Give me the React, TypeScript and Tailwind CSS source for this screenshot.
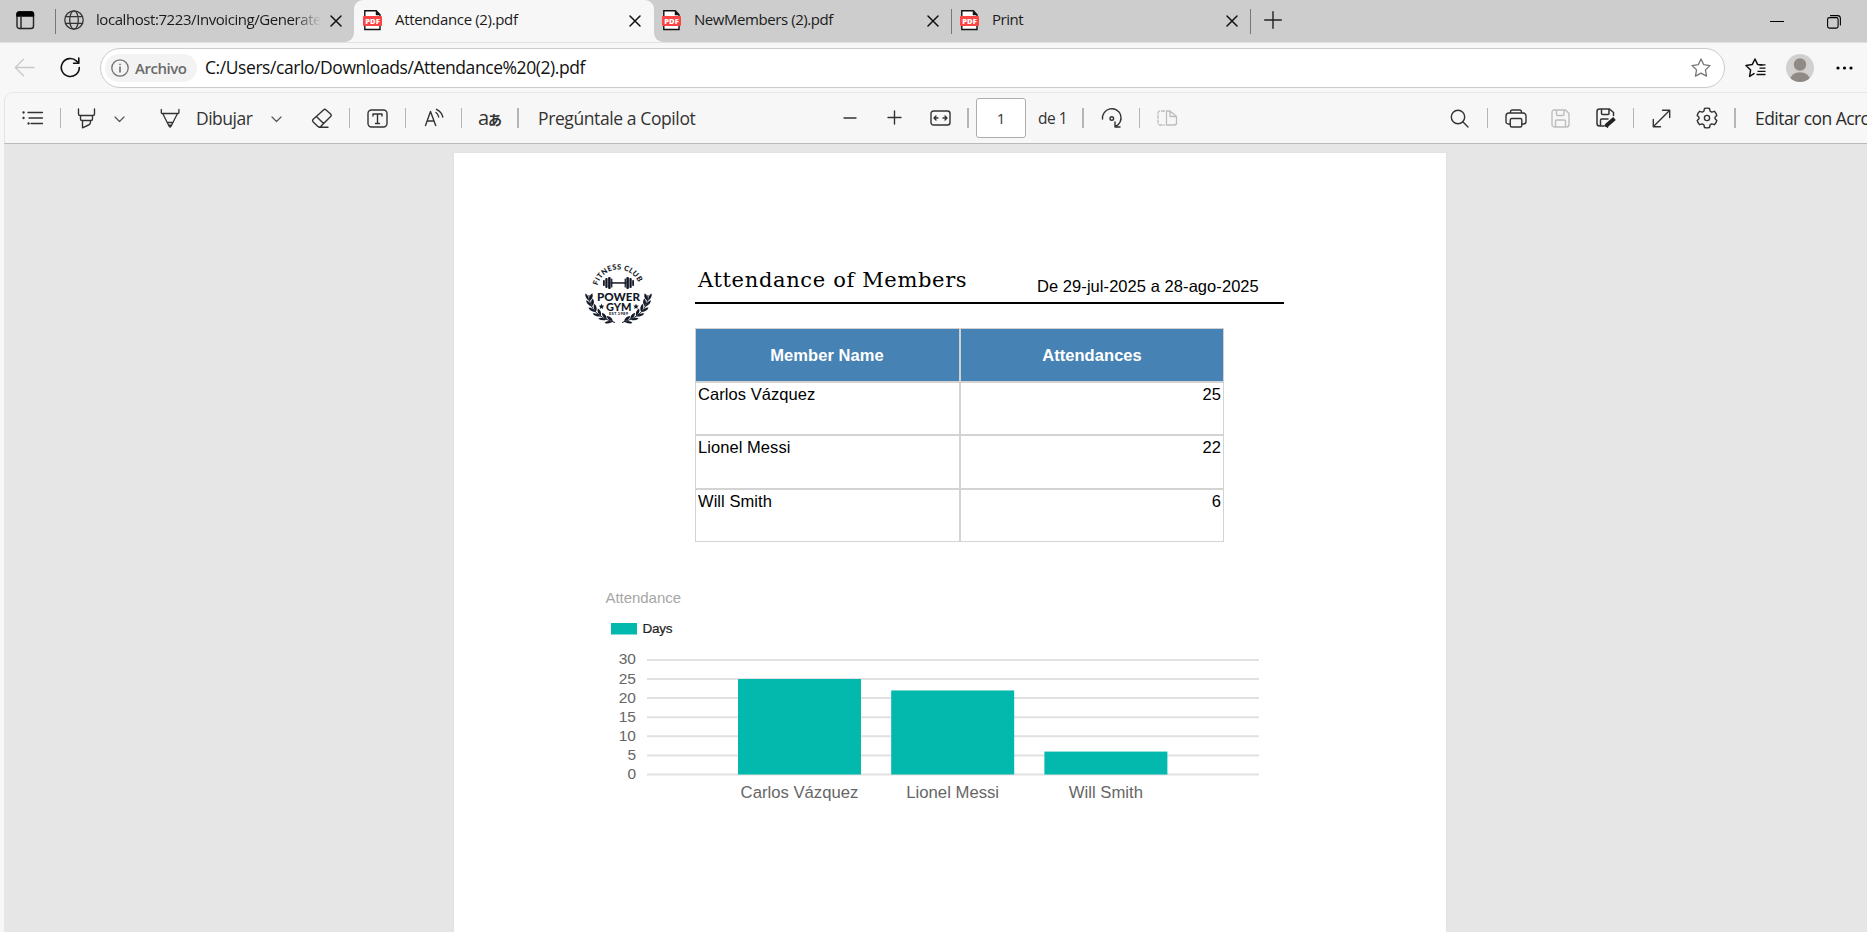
import type { ReactNode } from "react";

const UI = "font-['Open_Sans','Noto_Sans',sans-serif]";

type IconProps = {
  w: number;
  h: number;
  className?: string;
  color?: string;
  sw?: number;
  children: ReactNode;
};

function Icon({ w, h, className = "", color = "#333333", sw = 1.4, children }: IconProps) {
  return (
    <svg
      width={w}
      height={h}
      viewBox={`0 0 ${w} ${h}`}
      fill="none"
      stroke={color}
      strokeWidth={sw}
      strokeLinecap="round"
      strokeLinejoin="round"
      className={`shrink-0 ${className}`}
    >
      {children}
    </svg>
  );
}

function PdfIcon({ className = "" }: { className?: string }) {
  return (
    <svg width="20" height="21" viewBox="0 0 20 21" className={`shrink-0 ${className}`}>
      <path d="M1.800 .8h11.500l3.700 4v14.700H1.800z" fill="#ffffff" stroke="#111111" strokeWidth="1.400" />
      <path d="M13 1v4h4z" fill="#111111" stroke="#111111" strokeWidth=".5" />
      <rect x="0" y="6" width="19" height="10" rx="1" fill="#fb4545" />
      <text
        x="9.5"
        y="13.700"
        textAnchor="middle"
        fontFamily="Open Sans"
        fontWeight="800"
        fontSize="7.6"
        textLength="14.5"
        fill="#ffffff"
      >
        PDF
      </text>
    </svg>
  );
}

function CloseIcon({ className = "" }: { className?: string }) {
  return (
    <Icon w={12} h={12} color="#111111" sw={1.5} className={className}>
      <path d="M1 1l10 10M11 1L1 11" />
    </Icon>
  );
}

function TabBar() {
  return (
    <div className="flex h-[42px] shrink-0">
      <div className="flex h-[42px] w-[354px] items-start rounded-br-[9px] bg-[#cdcdcd]">
        <Icon w={19} h={19} className="ml-4 mt-[11px]" color="#222222">
          <rect x="1" y="1" width="16.5" height="16.5" rx="2.5" />
          <path d="M1 5V3q0-2 2-2h12.500q2 0 2 2v2z" fill="#000000" stroke="#000000" />
          <path d="M5 5v12.500" />
        </Icon>
        <div className="ml-5 mt-[9px] h-[25px] w-px bg-[#777777]" />
        <Icon w={20} h={20} className="ml-2 mt-[10px]" color="#333333" sw={1.3}>
          <circle cx="10" cy="10" r="9.200" />
          <ellipse cx="10" cy="10" rx="4.300" ry="9.200" />
          <path d="M1.500 6.700h17M1.500 13.300h17" />
        </Icon>
        <div className="ml-3 mt-2 w-[225px] overflow-hidden [mask-image:linear-gradient(to_right,black_88%,transparent)]">
          <span className="block whitespace-nowrap text-[15px] leading-[22px] tracking-[-0.43px] text-[#1b1b1b]">
            localhost:7223/Invoicing/Generate
          </span>
        </div>
        <CloseIcon className="ml-[9px] mt-[15px]" />
      </div>
      <div className="h-[42px] w-[300px] bg-[#cdcdcd]">
        <div className="flex h-full items-start rounded-t-[9px] bg-[#f7f7f7]">
          <PdfIcon className="ml-[9px] mt-[10px]" />
          <span className="ml-3 mt-2 w-[234px] whitespace-nowrap text-[15px] leading-[22px] tracking-[-0.34px] text-[#1b1b1b]">
            Attendance (2).pdf
          </span>
          <CloseIcon className="mt-[15px]" />
        </div>
      </div>
      <div className="flex h-[42px] flex-1 items-start rounded-bl-[9px] bg-[#cdcdcd]">
        <PdfIcon className="ml-2 mt-[10px]" />
        <span className="ml-3 mt-2 w-[233px] whitespace-nowrap text-[15px] leading-[22px] tracking-[-0.43px] text-[#1b1b1b]">
          NewMembers (2).pdf
        </span>
        <CloseIcon className="mt-[15px]" />
        <div className="ml-3 mt-[9px] h-[25px] w-px bg-[#777777]" />
        <PdfIcon className="ml-2 mt-[10px]" />
        <span className="ml-3 mt-2 w-[234px] whitespace-nowrap text-[15px] leading-[22px] tracking-[-0.5px] text-[#1b1b1b]">
          Print
        </span>
        <CloseIcon className="mt-[15px]" />
        <div className="ml-3 mt-[9px] h-[25px] w-px bg-[#777777]" />
        <Icon w={18} h={18} className="ml-[13px] mt-[11px]" color="#222222">
          <path d="M9 .7v16.600M.7 9h16.600" />
        </Icon>
        <div className="flex-1" />
        <svg width="14" height="3" className="mt-5 shrink-0">
          <path d="M0 1.500h14" stroke="#000000" strokeWidth="1" />
        </svg>
        <Icon w={14} h={14} className="ml-[43px] mr-[26px] mt-[15px]" color="#000000" sw={1.1}>
          <rect x=".6" y="2.600" width="10.500" height="10.500" rx="1.800" />
          <path d="M3.500.6h7q2.900 0 2.900 2.900v6.500" />
        </Icon>
      </div>
    </div>
  );
}

const STAR = "M10 1l2.750 5.700 6.250.85-4.550 4.350 1.100 6.200L10 15.100l-5.550 3 1.100-6.200L1 7.550l6.250-.85z";

function AddressBar() {
  return (
    <div className="flex h-[50px] shrink-0 items-start border-t border-[#e2e2e2] bg-[#f7f7f7]">
      <Icon w={21} h={19} className="ml-[14px] mt-[15px]" color="#c8c8c8" sw={1.3}>
        <path d="M20 9.500H1.500M9.500 1.300L1.300 9.500l8.200 8.200" />
      </Icon>
      <Icon w={21} h={21} className="ml-[25px] mt-[14px]" color="#111111" sw={1.600}>
        <path d="M19.300 10.500a9 9 0 1 1-2.700-6.400l1.900 1.900" />
        <path d="M18.800 1v5.200h-5.200" />
      </Icon>
      <div className="ml-[19px] mt-[5px] flex h-10 w-[1625px] items-center rounded-full border border-[#cccccc] bg-white">
        <div className="ml-1 flex h-7 w-[92px] items-center rounded-full bg-[#f3f3f3]">
          <Icon w={18} h={18} className="ml-[6px]" color="#6f6f6f" sw={1.3}>
            <circle cx="9" cy="9" r="8.200" />
            <path d="M9 8v5M9 5.200v.2" strokeWidth="1.600" />
          </Icon>
          <span className="ml-[6px] text-[15px] font-semibold leading-5 tracking-[-0.45px] text-[#6b6b6b]">Archivo</span>
        </div>
        <span className="ml-2 mt-[-2px] w-[1100px] whitespace-nowrap text-[17.5px] leading-6 tracking-[-0.43px] text-[#111111]">
          C:/Users/carlo/Downloads/Attendance%20(2).pdf
        </span>
        <div className="flex-1" />
        <Icon w={20} h={20} className="mr-[13px]" color="#767676" sw={1.3}>
          <path d={STAR} />
        </Icon>
      </div>
      <Icon w={22} h={20} className="ml-5 mt-[15px]" color="#111111" sw={1.500}>
        <path d="M9 15.600L4.600 18.400l1-6.400L1 7.500l6.200-.9L10 1l2.600 5.400 4.400.5" />
        <path d="M14.500 10.200h6M12.500 13.300h8M14.500 6.900h6M11.500 16.500h9" strokeLinecap="butt" strokeWidth="1.300" />
      </Icon>
      <svg width="28" height="28" viewBox="0 0 28 28" className="ml-[19px] mt-[11px] shrink-0">
        <clipPath id="avatar">
          <circle cx="14" cy="14" r="14" />
        </clipPath>
        <g clipPath="url(#avatar)">
          <rect width="28" height="28" fill="#d2d0ce" />
          <circle cx="14" cy="10.500" r="6.200" fill="#8f8a86" />
          <ellipse cx="14" cy="26" rx="10" ry="7.800" fill="#8f8a86" />
        </g>
      </svg>
      <svg width="17" height="4" className="ml-[22px] mt-[23px] shrink-0">
        <circle cx="2" cy="2" r="1.600" />
        <circle cx="8.500" cy="2" r="1.600" />
        <circle cx="15" cy="2" r="1.600" />
      </svg>
    </div>
  );
}

function Sep({ className }: { className: string }) {
  return <div className={`h-5 bg-[#b5b5b5] ${className}`} />;
}

function Chevron({ className }: { className: string }) {
  return (
    <Icon w={11} h={7} className={`mt-[3px] ${className}`} color="#555555" sw={1.2}>
      <path d="M1 1l4.500 4.500L10 1" />
    </Icon>
  );
}

function PdfToolbar() {
  return (
    <div className="flex h-[52px] shrink-0 items-center overflow-hidden whitespace-nowrap rounded-tl-[9px] border-b border-l border-t border-b-[#bababa] border-l-[#e4e4e4] border-t-[#e9e9e9] bg-[#f7f7f7] text-[#333333] [&>*]:shrink-0">
      <Icon w={22} h={16} className="ml-[17px]" sw={1.300}>
        <path d="M6 2.500h14.500M7 8h13.500M9 13.500h11.500" />
        <path d="M1.500 2.500h.1M1.500 8h.1M6.500 13.500h.1" strokeWidth="2.300" />
      </Icon>
      <Sep className="ml-4 w-px" />
      <Icon w={20} h={21} className="ml-4">
        <path d="M1.500 1v5q0 1.500 1.500 1.500h13q1.500 0 1.500-1.500V1M3.500 7.500v3.500q0 1.500 1.500 1.500h9q1.500 0 1.500-1.500V7.500M5.500 12.500v7.300l6-2.800q2-1 2-2.800v-1.700" />
      </Icon>
      <Chevron className="ml-[17px]" />
      <Icon w={21} h={21} className="ml-[35px]" sw={1.300}>
        <path d="M1.300 1.500v3.200q0 .8.800.8h16q.8 0 .8-.8V1.500M2.700 5.500l6.300 12.500q1.100 2 2.200 0l6.300-12.500M7.200 14.500h5.800" />
        <path d="M8.700 17l1.400 2.200 1.400-2.200z" fill="#333333" strokeWidth=".6" />
      </Icon>
      <span className="ml-[15px] w-[56px] text-[17.5px] leading-6 tracking-[-0.5px]">Dibujar</span>
      <Chevron className="ml-[19px]" />
      <Icon w={22} h={21} className="ml-[29px]">
        <path d="M12.500 2q1.300-1.300 2.600 0l4.500 4q1.300 1.300 0 2.600L9.700 18.500q-1.400 1.200-2.700 0l-4.800-4.600q-1.200-1.300 0-2.600zM5.600 8.700l7 6.700M8 19.300h9" />
      </Icon>
      <Sep className="ml-4 w-px" />
      <Icon w={21} h={19} className="ml-[17px]" sw={1.400}>
        <rect x="1" y="1" width="19" height="17" rx="3.500" />
        <path d="M6 7V5h9v2M10.500 5v9.500M8.500 14.500h4" />
      </Icon>
      <Sep className="ml-[17px] w-px" />
      <Icon w={21} h={20} className="ml-[18px]">
        <path d="M1.500 17.500L6.500 3.500l5.200 14M3.100 13h7M12 4.500q2.200 1.700 2.700 4.500M12.500 1.300q5.300 2.700 6.300 7.700" />
      </Icon>
      <Sep className="ml-4 w-px" />
      <span className="ml-4 flex w-6 items-baseline leading-5">
        <span className="w-[10px] text-[20px]">a</span>
        <span className="w-[14px] font-['Noto_Sans_CJK_JP',sans-serif] text-[14px] font-bold">あ</span>
      </span>
      <Sep className="ml-[15px] w-[2px]" />
      <span className="ml-[19px] w-[160px] text-[17.5px] leading-6 tracking-[-0.4px]">Pregúntale a Copilot</span>
      <Icon w={14} h={14} className="ml-[145px]">
        <path d="M1 7h12" />
      </Icon>
      <Icon w={15} h={15} className="ml-[30px] mt-[-1px]">
        <path d="M1 7.500h13M7.500 1v13" />
      </Icon>
      <Icon w={21} h={16} className="ml-7" sw={1.400}>
        <rect x="1" y="1" width="19" height="14" rx="2.500" />
        <path d="M4 8h4M6 6L4 8l2 2M17 8h-4M15 6l2 2-2 2" />
      </Icon>
      <Sep className="ml-4 w-[2px]" />
      <div className="ml-[7px] flex h-10 w-[50px] items-center justify-center rounded-[3px] border border-[#adadad] bg-white text-[15px]">
        1
      </div>
      <span className="ml-3 w-[30px] text-[15.5px] leading-6 tracking-[-0.5px]">de 1</span>
      <Sep className="ml-[14px] w-[2px]" />
      <Icon w={22} h={22} className="ml-[17px]" sw={1.400}>
        <path d="M1.500 12a9.300 9.300 0 1 1 13 7.500M14 15v5h5" />
        <circle cx="10.800" cy="11.500" r="1.800" />
      </Icon>
      <Sep className="ml-4 w-px" />
      <Icon w={21} h={16} className="ml-[17px]" color="#bdbdbd" sw={1.3}>
        <path d="M9.500 1H13l6.500 5.500v6.500q0 2-2 2h-8zM13 1.500v5h6" />
        <path d="M7.500 1H3Q1 1 1 3v10q0 2 2 2h4.500" strokeDasharray="3 1.800" />
      </Icon>
      <Icon w={20} h={19} className="ml-[272px]" sw={1.4}>
        <circle cx="8" cy="8" r="6.700" />
        <path d="M12.800 12.800l5.200 5.200" />
      </Icon>
      <Sep className="ml-[17px] w-px" />
      <Icon w={22} h={19} className="ml-[17px]" sw={1.400}>
        <path d="M5.500 4V3q0-2 2-2h7q2 0 2 2v1M5 15H3.500Q1 15 1 12.500V7q0-3 3-3h14q3 0 3 3v5.500q0 2.500-2.500 2.500H17" />
        <rect x="5.300" y="9.500" width="11.500" height="8.500" rx="1.500" />
      </Icon>
      <Icon w={20} h={19} className="ml-6" color="#bdbdbd" sw={1.4}>
        <path d="M3.500 1h11L18 4.500v11q0 2.500-2.500 2.500h-12Q1 18 1 15.500v-12Q1 1 3.500 1zM5.500 1.500v4q0 1 1 1h5.500q1 0 1-1v-4M4.500 18v-6q0-1 1-1h8q1 0 1 1v6" />
      </Icon>
      <Icon w={21} h={20} className="ml-[25px]" sw={1.500}>
        <path d="M8 18H3.500Q1 18 1 15.500v-12Q1 1 3.500 1h10L17.500 4.500v3M5.500 1.500v4q0 1 1 1H12q1 0 1-1v-4M4.500 18v-6q0-1 1-1H12" />
        <path d="M18.500 10.500l-7.500 6.500-1 2" strokeWidth="4" stroke="#222222" strokeLinecap="butt" />
      </Icon>
      <Sep className="ml-4 w-px" />
      <Icon w={20} h={19} className="ml-[18px]" sw={1.400}>
        <path d="M1.500 17.500L17.500 1.500M10.500 1.300h7.200V8.500M1.300 10.500v7.200h7.200" />
      </Icon>
      <Icon w={22} h={22} className="ml-6" sw={1.400}>
        <path d="M8.500 1.500q2.500-.7 5 0l.6 2.600 1.600 1 2.700-.8q1.800 1.800 2.400 4.200L19 10.300v1.400l1.800 1.800q-.6 2.400-2.400 4.200l-2.700-.8-1.600 1-.6 2.600q-2.500.7-5 0l-.6-2.600-1.600-1-2.700.8q-1.800-1.800-2.400-4.200L3 11.700v-1.400L1.200 8.500q.6-2.400 2.400-4.200l2.700.8 1.600-1z" />
        <circle cx="11" cy="11" r="2.600" />
      </Icon>
      <Sep className="ml-4 w-[2px]" />
      <span className="ml-[19px] text-[17.5px] leading-6 tracking-[-0.55px] text-[#2b2b2b]">Editar con Acrobat</span>
    </div>
  );
}

const LEAVES = [
  { x: 3.500, y: 32, a: -8 },
  { x: 5, y: 38, a: -22 },
  { x: 8, y: 44, a: -38 },
  { x: 12.500, y: 49, a: -50 },
  { x: 18, y: 53, a: -64 },
  { x: 24, y: 56, a: -78 },
];

function Laurel() {
  return (
    <g fill="#141927">
      <path d="M4 30Q4 50 30 57.500" fill="none" stroke="#141927" strokeWidth="1" />
      {LEAVES.map((l) => (
        <g key={l.y} transform={`translate(${l.x} ${l.y}) rotate(${l.a})`}>
          <path d="M0 4Q-4-.5-2.600-4Q.6-2 0 4z" />
          <path d="M.4 4Q5 2 4.400-3.200Q.4-1.800 .4 4z" />
        </g>
      ))}
    </g>
  );
}

function GymLogo() {
  return (
    <svg
      width="67"
      height="61"
      viewBox="0 0 67 61"
      className="mt-[3px] shrink-0 overflow-visible"
      fontFamily="Lato, sans-serif"
      fill="#141927"
    >
      <defs>
        <path id="logo-arc" d="M12.700 20.500A21.500 21.500 0 0 1 54.300 20.500" />
      </defs>
      <text fontSize="7.400" fontWeight="900" textLength="53">
        <textPath href="#logo-arc">FITNESS CLUB</textPath>
      </text>
      <g transform="translate(-.5 -2)">
        <rect x="26" y="19.200" width="16" height="1.500" />
        <rect x="18.500" y="17" width="1.800" height="6" rx=".8" />
        <rect x="20.800" y="15" width="2.300" height="10" rx="1" />
        <rect x="23.600" y="14" width="2.600" height="12" rx="1" />
        <rect x="26.600" y="15.500" width="1.300" height="9" rx=".5" />
        <rect x="47.700" y="17" width="1.800" height="6" rx=".8" />
        <rect x="44.900" y="15" width="2.300" height="10" rx="1" />
        <rect x="41.800" y="14" width="2.600" height="12" rx="1" />
        <rect x="40.100" y="15.500" width="1.300" height="9" rx=".5" />
      </g>
      <text x="33.500" y="35.500" textAnchor="middle" fontSize="11.600" fontWeight="900" textLength="43" lengthAdjust="spacingAndGlyphs">
        POWER
      </text>
      <text x="33.800" y="45.500" textAnchor="middle" fontSize="11" fontWeight="900" textLength="25.500" lengthAdjust="spacingAndGlyphs">
        GYM
      </text>
      <path d="M16.500 38.700l.8 1.800 1.900.2-1.400 1.300.4 1.900-1.700-1-1.700 1 .4-1.900-1.400-1.300 1.900-.2z" />
      <path d="M51 38.700l.8 1.800 1.900.2-1.400 1.300.4 1.900-1.700-1-1.700 1 .4-1.900-1.400-1.300 1.900-.2z" />
      <text x="33.500" y="50" textAnchor="middle" fontSize="4" fontWeight="900" textLength="19">
        EST.1989
      </text>
      <Laurel />
      <g transform="translate(67 0) scale(-1 1)">
        <Laurel />
      </g>
    </svg>
  );
}

const ROWS = [
  { name: "Carlos Vázquez", days: 25, height: "h-[53px]" },
  { name: "Lionel Messi", days: 22, height: "h-[54px]" },
  { name: "Will Smith", days: 6, height: "h-[53px]" },
];

function MembersTable() {
  return (
    <div className="w-[529px] text-[16.5px] leading-5 tracking-[0.06px] text-black">
      <div className="flex h-[54px] text-center font-bold leading-[52px] text-white">
        <div className="w-[265px] border border-[#cfd1d3] bg-[#4682b4] pr-px">Member Name</div>
        <div className="w-[264px] border border-[#cfd1d3] bg-[#4682b4]">Attendances</div>
      </div>
      {ROWS.map((r) => (
        <div key={r.name} className={`flex ${r.height}`}>
          <div className="w-[265px] border border-[#d3d3d3] pl-[2px] pt-px">{r.name}</div>
          <div className="w-[264px] border border-[#d3d3d3] pr-[2px] pt-px text-right">{r.days}</div>
        </div>
      ))}
    </div>
  );
}

const CHART_BASE = 194.500;
const PER_DAY = 3.820;

function AttendanceChart() {
  return (
    <svg width="672" height="230" viewBox="0 0 672 230" fontFamily="Liberation Sans, Arial, sans-serif" className="ml-[146px] mt-[38px]">
      <text x="5.500" y="22.500" fontSize="15" fill="#a6a6a6" textLength="75.500">
        Attendance
      </text>
      <rect x="11" y="43" width="26" height="11.500" fill="#03b8ac" />
      <text x="42.500" y="53" fontSize="13.500" fill="#222222" stroke="#222222" strokeWidth=".2" textLength="30">
        Days
      </text>
      {[0, 5, 10, 15, 20, 25, 30].map((v) => (
        <g key={v}>
          <path d={`M47 ${CHART_BASE - v * PER_DAY}H659`} stroke="#e1e1e1" strokeWidth="2" />
          <text x="36" y={CHART_BASE - v * PER_DAY + 4.500} textAnchor="end" fontSize="15.500" fill="#666666">
            {v}
          </text>
        </g>
      ))}
      {ROWS.map((r, i) => (
        <g key={r.name}>
          <rect
            x={138 + i * 153.200}
            y={CHART_BASE - r.days * PER_DAY}
            width="123"
            height={r.days * PER_DAY}
            fill="#03b8ac"
          />
          <text x={199.500 + i * 153.200} y="218" textAnchor="middle" fontSize="16.700" fill="#666666">
            {r.name}
          </text>
        </g>
      ))}
    </svg>
  );
}

function ReportPage() {
  return (
    <div className="ml-[450px] mt-[9px] flex w-[992px] flex-1 flex-col bg-white font-['Liberation_Sans',Arial,sans-serif] shadow-[0_0_2px_#d8d8d8]">
      <div className="flex h-[151px] items-start pl-[131px] pt-[109px]">
        <GymLogo />
        <div className="ml-[43px] flex h-[42px] w-[589px] items-start whitespace-nowrap border-b-2 border-black text-black">
          <h1 className="ml-[3px] mt-1 w-[339px] font-['DejaVu_Serif',serif] text-[21px] leading-[28px] tracking-[0.65px]">
            Attendance of Members
          </h1>
          <span className="mt-[14px] text-[16.5px] leading-5 tracking-[0.06px]">De 29-jul-2025 a 28-ago-2025</span>
        </div>
      </div>
      <div className="ml-[241px] mt-6">
        <MembersTable />
      </div>
      <AttendanceChart />
    </div>
  );
}

export default function App() {
  return (
    <div className={`flex h-[932px] w-[1867px] flex-col overflow-hidden bg-[#f7f7f7] ${UI}`}>
      <TabBar />
      <AddressBar />
      <div className="ml-1 flex flex-1 flex-col overflow-hidden">
        <PdfToolbar />
        <div className="flex flex-1 flex-col bg-[#e6e6e6]">
          <ReportPage />
        </div>
      </div>
    </div>
  );
}
